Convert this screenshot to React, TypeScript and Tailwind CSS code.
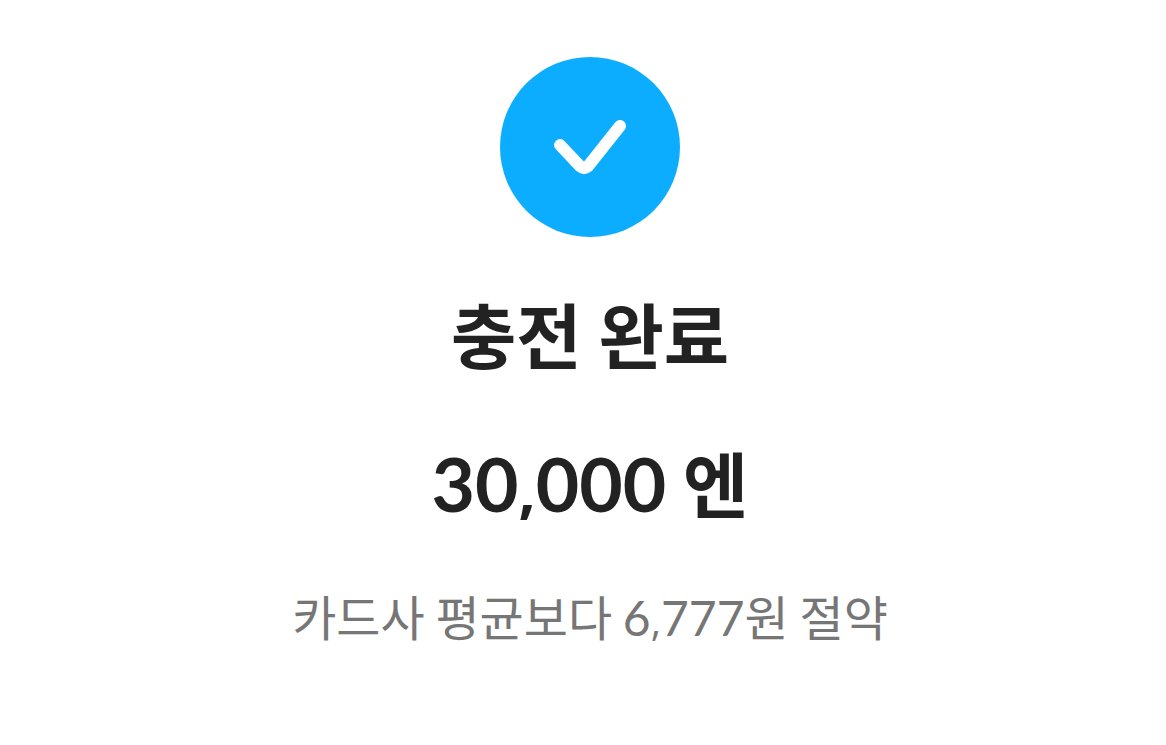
function CheckBadge() {
  return (
    <svg
      className="size-[180px]"
      viewBox="0 0 180 180"
      fill="none"
      aria-hidden="true"
    >
      <circle cx="90" cy="90" r="90" fill="#0CADFF" />
      <path
        d="M60 88 L80.2 109.4 Q84.2 112.6 88 109.2 L120 69"
        stroke="#fff"
        strokeWidth="12"
        strokeLinecap="round"
        strokeLinejoin="round"
      />
    </svg>
  );
}

function App() {
  return (
    <main className="flex min-h-screen flex-col items-center bg-white pt-[57px] pl-3.5 text-center font-['Noto_Sans_CJK_KR',sans-serif] text-[#222]">
      <CheckBadge />
      <h1 className="mt-14 font-['Inter','Noto_Sans_CJK_KR',sans-serif] text-[71px] leading-[88px] font-bold">
        충전 완료
      </h1>
      <p className="mt-[58px] font-['Inter','Noto_Sans_CJK_KR',sans-serif] text-[71px] leading-[88px] font-bold">
        <span className="font-['Lato',sans-serif] text-[75px]">
          30<span className="font-['Open_Sans',sans-serif] text-[60px]">,</span>000
        </span>{' '}
        엔
      </p>
      <p className="mt-[50px] text-[48px] leading-[64px] text-[#767676]">
        카드사 평균보다{' '}
        <span className="font-['Lato',sans-serif]">
          6<span className="font-['Open_Sans',sans-serif] text-[40px]">,</span>777
        </span>
        원 절약
      </p>
    </main>
  );
}

export default App;
